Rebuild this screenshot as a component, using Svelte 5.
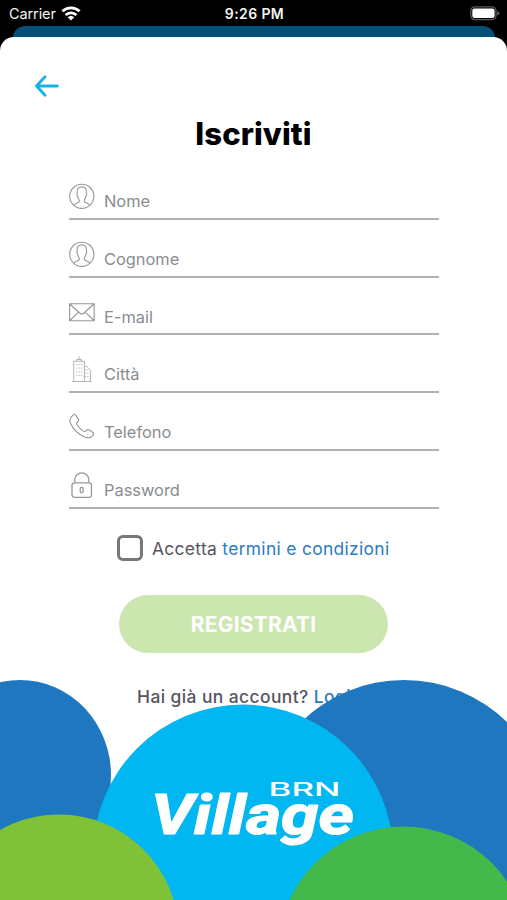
<script>
	let accepted = false;

	let fields = [
		{ id: 'nome', label: 'Nome', icon: 'user', type: 'text', value: '' },
		{ id: 'cognome', label: 'Cognome', icon: 'user', type: 'text', value: '' },
		{ id: 'email', label: 'E-mail', icon: 'mail', type: 'email', value: '' },
		{ id: 'citta', label: 'Città', icon: 'city', type: 'text', value: '' },
		{ id: 'telefono', label: 'Telefono', icon: 'phone', type: 'tel', value: '' },
		{ id: 'password', label: 'Password', icon: 'lock', type: 'password', value: '' }
	];
</script>

<div class="screen">
	<div class="status">
		<div class="carrier">
			<span>Carrier</span>
			<svg width="20" height="15" viewBox="0 0 20 15">
				<g fill="none" stroke="#fff" stroke-width="2.8">
					<path d="M1.4 5.3a12.3 12.3 0 0 1 17.2 0" />
					<path d="M4.6 9a7.8 7.8 0 0 1 10.8 0" />
				</g>
				<path d="M6.7 11.2a4.8 4.8 0 0 1 6.6 0L10 14.5z" fill="#fff" />
			</svg>
		</div>
		<div class="time">9:26 PM</div>
		<div class="battery">
			<svg width="30" height="15" viewBox="0 0 30 15">
				<rect x="0.8" y="0.8" width="25.2" height="12.8" rx="4" fill="none" stroke="#59595b" stroke-width="1.3" />
				<rect x="2.3" y="2.4" width="22.3" height="9.6" rx="2.3" fill="#fff" />
				<path d="M27.3 5v4.6q2-.8 2-2.3t-2-2.3z" fill="#69696b" />
			</svg>
		</div>
	</div>
	<div class="behind"></div>

	<div class="sheet">
		<button class="back" aria-label="Indietro">
			<svg width="24" height="22" viewBox="0 0 24 22" fill="none" stroke="#16b1ea" stroke-width="2.8" stroke-linecap="round" stroke-linejoin="round">
				<path d="M22.3 11H1.7M10 1.7L1.5 11l8.5 9.3" />
			</svg>
		</button>
		<h1>Iscriviti</h1>

		<form on:submit|preventDefault>
			{#each fields as field}
				<div class="field">
					<svg width="26" height="28" viewBox="0 0 26 28" fill="none" stroke="#95979b" stroke-width="1.1" stroke-linejoin="round">
						{#if field.icon == 'user'}
							<circle cx="12.8" cy="14.3" r="12.1" />
							<path d="M4.8 23.3c.8-1.5 2.5-2.1 4.3-2.8 1.6-.6 1.5-2.1.7-3.3-.8-1.1-1.1-2.2-1.3-3.5-.8-.6-.8-2-.2-2.5-.8-4.3 1.2-6.3 4.5-6.3s5.3 2 4.5 6.3c.6.5.6 1.9-.2 2.5-.2 1.3-.5 2.4-1.3 3.5-.8 1.2-.9 2.7.7 3.3 1.8.7 3.5 1.3 4.3 2.8" />
						{:else if field.icon == 'mail'}
							<path d="M.6 5.7h24.6v17H.6zM.8 6l9.8 9q2.2 2 4.4 0l9.8-9M.8 22.5l8.8-8.3M25 22.5l-8.8-8.3" />
						{:else if field.icon == 'city'}
							<g stroke="#aaacb0" stroke-width="0.9">
								<path d="M3 26.5h19.5M4.7 26.5V6.3h10.7v20.2M7.7 6.2V4.5h4.6v1.7M10 4.5V1.2M15.5 11.4h2.2l3.8 3.8v11.3" />
								<path d="M7.2 9.6h6.2M7.2 13.2h6.2M7.2 16.8h6.2M7.2 20.4h6.2M15.8 14.8h4M15.8 18.2h4M15.8 21.6h4" stroke-dasharray="1.2 1.2" />
							</g>
						{:else if field.icon == 'phone'}
							<path d="M3.9 2.2c1.2-1 2.3-.8 3.1.4l2.2 3.3c.9 1.4.4 2.3-.7 3.1-1.3.9-1.1 1.8.1 3.5 1.4 2 3.1 3.7 5.1 5.1 1.7 1.2 2.6 1.4 3.5.1.8-1.1 1.7-1.6 3.1-.7l3.3 2.2c1.2.8 1.4 1.9.4 3.1-1.8 2.2-4.2 3.2-7.5 2C9.500 21.800 3.900 16 1.300 9.800.1 6.400 1.300 4.100 3.900 2.200z" />
						{:else}
							<g stroke-width="1.3">
								<rect x="3" y="11.8" width="19.5" height="14.5" rx="2.5" />
								<path d="M5.7 11.6V9a7.1 7.1 0 0 1 14.2 0v2.6" />
								<rect x="11.2" y="16.3" width="2.9" height="5.4" rx="1.4" />
							</g>
						{/if}
					</svg>
					<input type={field.type} id={field.id} placeholder={field.label} bind:value={field.value} />
				</div>
			{/each}

			<div class="terms">
				<input type="checkbox" id="terms" bind:checked={accepted} />
				<label for="terms">Accetta <a href="#termini">termini e condizioni</a></label>
			</div>
			<button class="submit" type="submit">REGISTRATI</button>
		</form>
		<p class="login">Hai già un account? <a href="#login">Login</a></p>
	</div>

	<!-- bubbles lie over the bottom of the form -->
	<svg class="bubbles" width="507" height="230" viewBox="0 670 507 230">
		<ellipse cx="20" cy="775" rx="91" ry="95" fill="#1f78bf" />
		<circle cx="404" cy="827" r="147" fill="#1f78bf" />
		<circle cx="243" cy="854.5" r="150" fill="#00b7f1" />
		<circle cx="59" cy="934" r="119.5" fill="#7fc238" />
		<circle cx="403.5" cy="951.5" r="125" fill="#45b84b" />
		<text class="village" x="151" y="833.5" textLength="203" lengthAdjust="spacingAndGlyphs">Village</text>
		<text class="brn" x="268.5" y="795.5" textLength="72" lengthAdjust="spacingAndGlyphs">BRN</text>
	</svg>
</div>

<style>
	:global(body) {
		margin: 0;
		background: #000;
	}
	.screen {
		position: relative;
		width: 507px;
		height: 900px;
		overflow: hidden;
		background: #000;
		font-family: Inter, sans-serif;
	}
	.status {
		display: grid;
		grid-template-columns: 1fr 1fr 1fr;
		align-items: center;
		height: 26px;
		padding: 0 7px 0 9px;
		box-sizing: border-box;
		color: #f4f4f4;
		font-size: 14.5px;
	}
	.carrier {
		display: flex;
		align-items: center;
		gap: 5px;
		letter-spacing: -0.1px;
	}
	.time {
		text-align: center;
		font-weight: 600;
		font-size: 14px;
		letter-spacing: 0.4px;
	}
	.battery {
		display: flex;
		justify-content: flex-end;
	}
	.behind {
		height: 28px;
		margin: 0 12px 0 13px;
		border-radius: 12px 12px 0 0;
		background: #005078;
	}
	.sheet {
		height: 863px;
		margin-top: -17px;
		box-sizing: border-box;
		padding-top: 38px;
		border-radius: 14px 14px 0 0;
		background: #fff;
	}
	button {
		border: none;
		padding: 0;
		font-family: inherit;
	}
	.back {
		display: block;
		width: 24px;
		height: 22px;
		margin-left: 35px;
		background: none;
	}
	.back svg {
		display: block;
	}
	h1 {
		margin: 17px 0 0;
		height: 40px;
		line-height: 40px;
		text-align: center;
		font-size: 31px;
		font-weight: 800;
		letter-spacing: 0.1px;
		color: #000;
	}
	form {
		width: 370px;
		margin: 8px auto 0 69px;
	}
	.field {
		display: flex;
		align-items: flex-start;
		gap: 9px;
		height: 57.8px;
		box-sizing: border-box;
		padding-top: 20px;
		border-bottom: 2px solid #b0b1b4;
	}
	.field svg {
		flex: none;
	}
	.field input {
		flex: 1;
		min-width: 0;
		height: 24px;
		margin-top: 7px;
		padding: 0;
		border: none;
		outline: none;
		background: none;
		font-family: inherit;
		font-size: 16.4px;
	}
	.field input::placeholder {
		color: #898c91;
		opacity: 1;
	}
	.terms {
		display: flex;
		align-items: center;
		gap: 9px;
		margin: 26px 0 0 48px;
		height: 27px;
		font-size: 17.4px;
		letter-spacing: 0.33px;
		color: #54555f;
		white-space: nowrap;
	}
	.terms input {
		appearance: none;
		width: 26px;
		height: 26px;
		margin: 0;
		border: 3px solid #777;
		border-radius: 6px;
	}
	a {
		color: #2a7bc4;
		text-decoration: none;
	}
	.submit {
		display: block;
		width: 269px;
		height: 58px;
		margin: 33px 0 0 50px;
		padding-top: 2px;
		border-radius: 29px;
		background: #cbe6af;
		color: #fff;
		font-size: 21px;
		font-weight: 700;
		letter-spacing: 0.2px;
	}
	.login {
		margin: 31px 0 0 137px;
		height: 26px;
		line-height: 26px;
		font-size: 17.4px;
		font-weight: 500;
		letter-spacing: 0.43px;
		color: #54555f;
	}
	.bubbles {
		position: absolute;
		left: 0;
		bottom: 0;
	}
	.village {
		font-family: Roboto, sans-serif;
		font-size: 56px;
		font-weight: 700;
		font-style: italic;
		fill: #fff;
		stroke: #fff;
		stroke-width: 1.2px;
		stroke-linejoin: round;
	}
	.brn {
		font-family: Inter, sans-serif;
		font-size: 18px;
		font-weight: 500;
		fill: #fff;
	}
</style>
